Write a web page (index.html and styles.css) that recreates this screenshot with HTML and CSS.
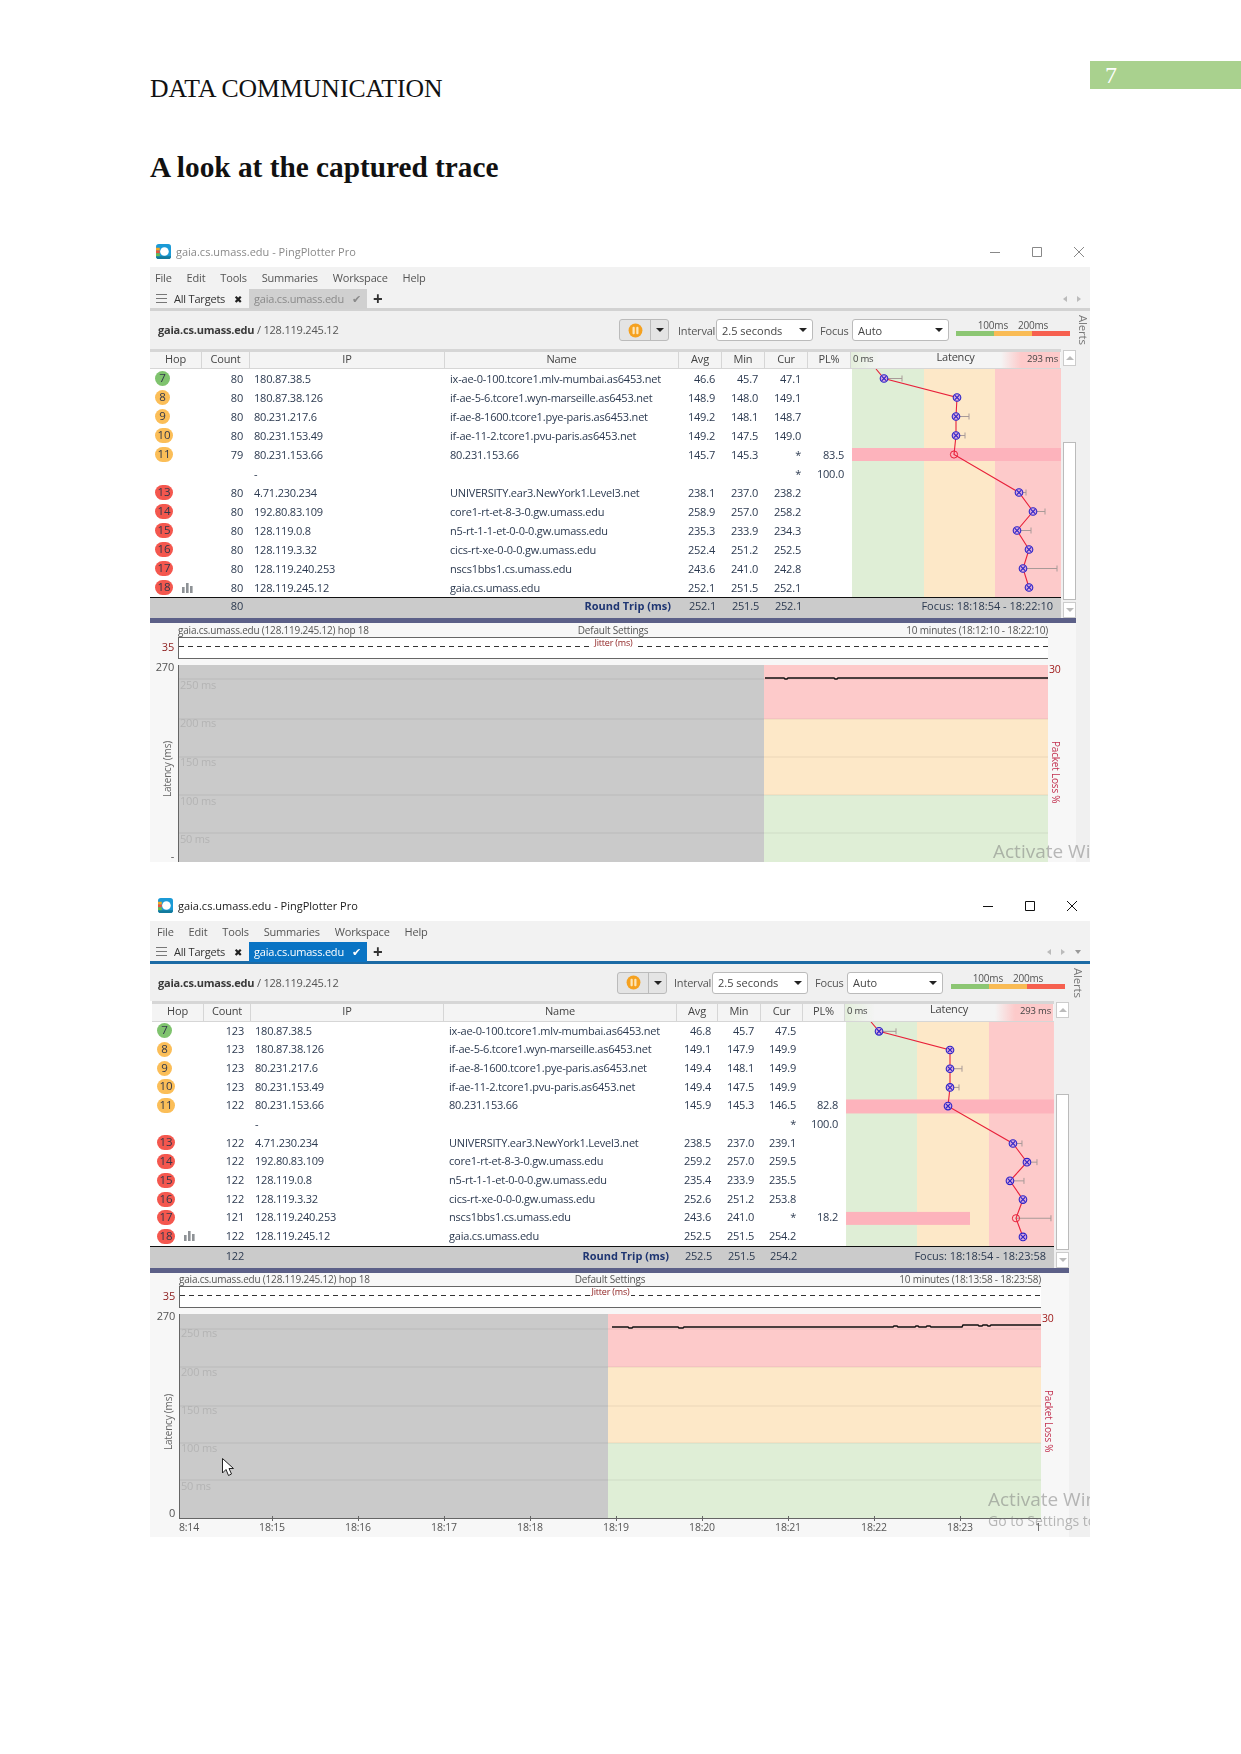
FILE: index.html

```html
<!DOCTYPE html>
<html lang="en">
<head>
  <meta charset="UTF-8" />
  <title>Data Communication</title>
  <link rel="stylesheet" href="styles.css">
</head>
<body>

  <svg class="defs" aria-hidden="true">
    <symbol id="mark" viewBox="0 0 10 10">
      <circle cx="5" cy="5" r="3.8" fill="#d9a6d9" stroke="#2a22c8" stroke-width="1.1"/>
      <path d="M2.6 2.6 7.4 7.4M7.4 2.6 2.6 7.4" stroke="#2a22c8" stroke-width="1.1"/>
    </symbol>
    <symbol id="logo" viewBox="0 0 16 16">
      <rect width="16" height="16" rx="3" fill="#1b9ad6"/>
      <path d="M0 13h16v0a3 3 0 0 1-3 3H3a3 3 0 0 1-3-3z" fill="#137a9c"/>
      <rect y="4" width="4" height="3" fill="#f5a623"/>
      <rect y="7" width="4" height="3" fill="#e8553a"/>
      <rect y="10" width="4" height="3" fill="#6dbb4b"/>
      <circle cx="9" cy="8" r="4.6" fill="#fff"/>
    </symbol>
    <symbol id="pause" viewBox="0 0 16 16">
      <circle cx="8" cy="8" r="7.4" fill="#f5a11f"/>
      <rect x="4.8" y="4" width="2.4" height="8" rx="1" fill="#fde6b8"/>
      <rect x="8.8" y="4" width="2.4" height="8" rx="1" fill="#fde6b8"/>
    </symbol>
    <symbol id="bars" viewBox="0 0 11 10">
      <rect y="4" width="2.6" height="6" fill="#8e9296"/>
      <rect x="4" width="2.6" height="10" fill="#8e9296"/>
      <rect x="8" y="3" width="2.6" height="7" fill="#8e9296"/>
    </symbol>
  </svg>

  <header class="doc-head">
    <div class="doc-title">DATA COMMUNICATION</div>
    <div class="page-no">7</div>
  </header>

  <h1 class="doc-heading">A look at the captured trace</h1>

  <!-- first capture -->
  <section class="window win-a">
    <div class="titlebar">
      <svg class="logo"><use href="#logo"/></svg>
      <span class="title">gaia.cs.umass.edu - PingPlotter Pro</span>
      <div class="win-btns">
        <svg viewBox="0 0 10 10"><path d="M0 5.5h10"/></svg>
        <svg viewBox="0 0 10 10"><path d="M.5.5h9v9h-9z"/></svg>
        <svg viewBox="0 0 10 10"><path d="M0 0 10 10M10 0 0 10"/></svg>
      </div>
    </div>
    <nav class="menubar"><span>File</span><span>Edit</span><span>Tools</span><span>Summaries</span><span>Workspace</span><span>Help</span></nav>
    <div class="tabbar">
      <span class="burger"></span>
      <span class="all-targets">All Targets</span>
      <span class="tab-x">&#10006;</span>
      <span class="tab">gaia.cs.umass.edu<i class="tab-check">&#10004;</i></span>
      <span class="tab-add">+</span>
      <span class="tab-nav"><i class="tri-l"></i><i class="tri-r"></i></span>
    </div>

    <div class="content">
      <div class="content-main">
        <div class="toolbar">
          <div class="crumb"><b>gaia.cs.umass.edu</b> / 128.119.245.12</div>
          <div class="pause-group">
            <span class="pause-btn"><svg><use href="#pause"/></svg></span>
            <span class="pause-drop"><i class="caret"></i></span>
          </div>
          <span class="tool-label">Interval</span>
          <span class="combo">2.5 seconds<i class="caret"></i></span>
          <span class="tool-label label-focus">Focus</span>
          <span class="combo">Auto<i class="caret"></i></span>
          <div class="legend">
            <div class="legend-text"><span>100ms</span><span>200ms</span></div>
            <div class="legend-bar"><i class="lg-green"></i><i class="lg-orange"></i><i class="lg-red"></i></div>
          </div>
        </div>

        <div class="results">
          <div class="results-main">
            <div class="thead">
              <span>Hop</span><span>Count</span><span>IP</span><span>Name</span><span>Avg</span><span>Min</span><span>Cur</span><span>PL%</span>
              <div class="lat-head"><em>0 ms</em><strong>Latency</strong><em class="lat-max">293 ms</em></div>
            </div>
            <div class="tbody">
              <div class="rows">
                <div class="row"><span class="hop"><b class="badge green">7</b></span><span class="n">80</span><span>180.87.38.5</span><span>ix-ae-0-100.tcore1.mlv-mumbai.as6453.net</span><span class="n">46.6</span><span class="n">45.7</span><span class="n">47.1</span><span class="n"></span></div>
                <div class="row"><span class="hop"><b class="badge orange">8</b></span><span class="n">80</span><span>180.87.38.126</span><span>if-ae-5-6.tcore1.wyn-marseille.as6453.net</span><span class="n">148.9</span><span class="n">148.0</span><span class="n">149.1</span><span class="n"></span></div>
                <div class="row"><span class="hop"><b class="badge orange">9</b></span><span class="n">80</span><span>80.231.217.6</span><span>if-ae-8-1600.tcore1.pye-paris.as6453.net</span><span class="n">149.2</span><span class="n">148.1</span><span class="n">148.7</span><span class="n"></span></div>
                <div class="row"><span class="hop"><b class="badge orange wide">10</b></span><span class="n">80</span><span>80.231.153.49</span><span>if-ae-11-2.tcore1.pvu-paris.as6453.net</span><span class="n">149.2</span><span class="n">147.5</span><span class="n">149.0</span><span class="n"></span></div>
                <div class="row"><span class="hop"><b class="badge orange wide">11</b></span><span class="n">79</span><span>80.231.153.66</span><span>80.231.153.66</span><span class="n">145.7</span><span class="n">145.3</span><span class="n">*</span><span class="n">83.5</span></div>
                <div class="row"><span class="hop"></span><span class="n"></span><span>-</span><span></span><span class="n"></span><span class="n"></span><span class="n">*</span><span class="n">100.0</span></div>
                <div class="row"><span class="hop"><b class="badge red wide">13</b></span><span class="n">80</span><span>4.71.230.234</span><span>UNIVERSITY.ear3.NewYork1.Level3.net</span><span class="n">238.1</span><span class="n">237.0</span><span class="n">238.2</span><span class="n"></span></div>
                <div class="row"><span class="hop"><b class="badge red wide">14</b></span><span class="n">80</span><span>192.80.83.109</span><span>core1-rt-et-8-3-0.gw.umass.edu</span><span class="n">258.9</span><span class="n">257.0</span><span class="n">258.2</span><span class="n"></span></div>
                <div class="row"><span class="hop"><b class="badge red wide">15</b></span><span class="n">80</span><span>128.119.0.8</span><span>n5-rt-1-1-et-0-0-0.gw.umass.edu</span><span class="n">235.3</span><span class="n">233.9</span><span class="n">234.3</span><span class="n"></span></div>
                <div class="row"><span class="hop"><b class="badge red wide">16</b></span><span class="n">80</span><span>128.119.3.32</span><span>cics-rt-xe-0-0-0.gw.umass.edu</span><span class="n">252.4</span><span class="n">251.2</span><span class="n">252.5</span><span class="n"></span></div>
                <div class="row"><span class="hop"><b class="badge red wide">17</b></span><span class="n">80</span><span>128.119.240.253</span><span>nscs1bbs1.cs.umass.edu</span><span class="n">243.6</span><span class="n">241.0</span><span class="n">242.8</span><span class="n"></span></div>
                <div class="row"><span class="hop"><b class="badge red wide">18</b><svg class="bars"><use href="#bars"/></svg></span><span class="n">80</span><span>128.119.245.12</span><span>gaia.cs.umass.edu</span><span class="n">252.1</span><span class="n">251.5</span><span class="n">252.1</span><span class="n"></span></div>
              </div>
              <svg class="latency" viewBox="0 0 209 228">
                <rect width="72" height="228" fill="#dfeed6"/>
                <rect x="72" width="71" height="228" fill="#fde8c8"/>
                <rect x="143" width="66" height="228" fill="#fdcaca"/>
                <rect y="79" width="209" height="13" fill="#fdb3bc"/>
                <g class="tails">
                  <path d="M32 9.5H50M50 6.5v6M104 47.5H117M117 44.5v6M104 66.5H113M113 63.5v6M167 123.5H174M174 120.5v6M181 142.5H193M193 139.5v6M165 161.5H179M179 158.5v6M171 199.5H205M205 196.5v6"/>
                </g>
                <polyline class="trace" points="24,0 32,9.5 105,28.5 104,47.5 104,66.5 102,85.5 167,123.5 181,142.5 165,161.5 177,180.5 171,199.5 177,218.5"/>
                <use href="#mark" x="27" y="4.5" width="10" height="10"/>
                <use href="#mark" x="100" y="23.5" width="10" height="10"/>
                <use href="#mark" x="99" y="42.5" width="10" height="10"/>
                <use href="#mark" x="99" y="61.5" width="10" height="10"/>
                <circle class="lost" cx="102" cy="85.5" r="3.6"/>
                <use href="#mark" x="162" y="118.5" width="10" height="10"/>
                <use href="#mark" x="176" y="137.5" width="10" height="10"/>
                <use href="#mark" x="160" y="156.5" width="10" height="10"/>
                <use href="#mark" x="172" y="175.5" width="10" height="10"/>
                <use href="#mark" x="166" y="194.5" width="10" height="10"/>
                <use href="#mark" x="172" y="213.5" width="10" height="10"/>
              </svg>
            </div>
            <div class="summary">
              <span></span><span class="n">80</span><span class="round-trip">Round Trip (ms)</span><span class="n">252.1</span><span class="n">251.5</span><span class="n">252.1</span><span class="focus-range">Focus: 18:18:54 - 18:22:10</span>
            </div>
          </div>
          <div class="scrollbar">
            <span class="scroll-btn"><i class="up"></i></span>
            <span class="scroll-track"><i class="scroll-thumb"></i></span>
            <span class="scroll-btn"><i class="down"></i></span>
          </div>
        </div>

        <div class="divider"></div>

        <div class="graph">
          <div class="graph-head">
            <span>gaia.cs.umass.edu (128.119.245.12) hop 18</span>
            <span>Default Settings</span>
            <span class="graph-range">10 minutes (18:12:10 - 18:22:10)</span>
          </div>
          <div class="jitter-row">
            <span class="jitter-val">35</span>
            <div class="jitter"><span>Jitter (ms)</span></div>
          </div>
          <div class="plot-row">
            <div class="gutter">
              <span>270</span>
              <span class="vlabel">Latency (ms)</span>
              <span>-</span>
            </div>
            <svg class="plot" viewBox="0 0 870 197">
              <rect width="586" height="197" fill="#cacaca"/>
              <rect x="586" width="284" height="54" fill="#fdcaca"/>
              <rect x="586" y="54" width="284" height="76" fill="#fde8c8"/>
              <rect x="586" y="130" width="284" height="67" fill="#dfeed6"/>
              <path class="grid" d="M0 14H870M0 54H870M0 92H870M0 130H870M0 168H870"/>
              <path class="axis-y" d="M.5 0V197"/>
              <text x="2" y="24">250 ms</text>
              <text x="2" y="62">200 ms</text>
              <text x="2" y="101">150 ms</text>
              <text x="2" y="140">100 ms</text>
              <text x="2" y="178">50 ms</text>
              <path class="rtt" d="M587 13H606L607 14H609L610 13H656L657 14H659L660 13H870"/>
            </svg>
            <div class="gutter-right">
              <span class="loss-max">30</span>
              <span class="vlabel-right">Packet Loss %</span>
            </div>
          </div>
        </div>
      </div>
      <aside class="strip"><span>Alerts</span></aside>
    </div>
    <div class="activate">
      <div>Activate Windows</div>
      <small>Go to Settings to activate Windows.</small>
    </div>
  </section>

  <!-- second capture -->
  <section class="window win-b">
    <div class="titlebar">
      <svg class="logo"><use href="#logo"/></svg>
      <span class="title">gaia.cs.umass.edu - PingPlotter Pro</span>
      <div class="win-btns">
        <svg viewBox="0 0 10 10"><path d="M0 5.5h10"/></svg>
        <svg viewBox="0 0 10 10"><path d="M.5.5h9v9h-9z"/></svg>
        <svg viewBox="0 0 10 10"><path d="M0 0 10 10M10 0 0 10"/></svg>
      </div>
    </div>
    <nav class="menubar"><span>File</span><span>Edit</span><span>Tools</span><span>Summaries</span><span>Workspace</span><span>Help</span></nav>
    <div class="tabbar">
      <span class="burger"></span>
      <span class="all-targets">All Targets</span>
      <span class="tab-x">&#10006;</span>
      <span class="tab">gaia.cs.umass.edu<i class="tab-check">&#10004;</i></span>
      <span class="tab-add">+</span>
      <span class="tab-nav"><i class="tri-l"></i><i class="tri-r"></i><i class="tri-d"></i></span>
    </div>

    <div class="content">
      <div class="content-main">
        <div class="toolbar">
          <div class="crumb"><b>gaia.cs.umass.edu</b> / 128.119.245.12</div>
          <div class="pause-group">
            <span class="pause-btn"><svg><use href="#pause"/></svg></span>
            <span class="pause-drop"><i class="caret"></i></span>
          </div>
          <span class="tool-label">Interval</span>
          <span class="combo">2.5 seconds<i class="caret"></i></span>
          <span class="tool-label label-focus">Focus</span>
          <span class="combo">Auto<i class="caret"></i></span>
          <div class="legend">
            <div class="legend-text"><span>100ms</span><span>200ms</span></div>
            <div class="legend-bar"><i class="lg-green"></i><i class="lg-orange"></i><i class="lg-red"></i></div>
          </div>
        </div>

        <div class="results">
          <div class="results-main">
            <div class="thead">
              <span>Hop</span><span>Count</span><span>IP</span><span>Name</span><span>Avg</span><span>Min</span><span>Cur</span><span>PL%</span>
              <div class="lat-head"><em>0 ms</em><strong>Latency</strong><em class="lat-max">293 ms</em></div>
            </div>
            <div class="tbody">
              <div class="rows">
                <div class="row"><span class="hop"><b class="badge green">7</b></span><span class="n">123</span><span>180.87.38.5</span><span>ix-ae-0-100.tcore1.mlv-mumbai.as6453.net</span><span class="n">46.8</span><span class="n">45.7</span><span class="n">47.5</span><span class="n"></span></div>
                <div class="row"><span class="hop"><b class="badge orange">8</b></span><span class="n">123</span><span>180.87.38.126</span><span>if-ae-5-6.tcore1.wyn-marseille.as6453.net</span><span class="n">149.1</span><span class="n">147.9</span><span class="n">149.9</span><span class="n"></span></div>
                <div class="row"><span class="hop"><b class="badge orange">9</b></span><span class="n">123</span><span>80.231.217.6</span><span>if-ae-8-1600.tcore1.pye-paris.as6453.net</span><span class="n">149.4</span><span class="n">148.1</span><span class="n">149.9</span><span class="n"></span></div>
                <div class="row"><span class="hop"><b class="badge orange wide">10</b></span><span class="n">123</span><span>80.231.153.49</span><span>if-ae-11-2.tcore1.pvu-paris.as6453.net</span><span class="n">149.4</span><span class="n">147.5</span><span class="n">149.9</span><span class="n"></span></div>
                <div class="row"><span class="hop"><b class="badge orange wide">11</b></span><span class="n">122</span><span>80.231.153.66</span><span>80.231.153.66</span><span class="n">145.9</span><span class="n">145.3</span><span class="n">146.5</span><span class="n">82.8</span></div>
                <div class="row"><span class="hop"></span><span class="n"></span><span>-</span><span></span><span class="n"></span><span class="n"></span><span class="n">*</span><span class="n">100.0</span></div>
                <div class="row"><span class="hop"><b class="badge red wide">13</b></span><span class="n">122</span><span>4.71.230.234</span><span>UNIVERSITY.ear3.NewYork1.Level3.net</span><span class="n">238.5</span><span class="n">237.0</span><span class="n">239.1</span><span class="n"></span></div>
                <div class="row"><span class="hop"><b class="badge red wide">14</b></span><span class="n">122</span><span>192.80.83.109</span><span>core1-rt-et-8-3-0.gw.umass.edu</span><span class="n">259.2</span><span class="n">257.0</span><span class="n">259.5</span><span class="n"></span></div>
                <div class="row"><span class="hop"><b class="badge red wide">15</b></span><span class="n">122</span><span>128.119.0.8</span><span>n5-rt-1-1-et-0-0-0.gw.umass.edu</span><span class="n">235.4</span><span class="n">233.9</span><span class="n">235.5</span><span class="n"></span></div>
                <div class="row"><span class="hop"><b class="badge red wide">16</b></span><span class="n">122</span><span>128.119.3.32</span><span>cics-rt-xe-0-0-0.gw.umass.edu</span><span class="n">252.6</span><span class="n">251.2</span><span class="n">253.8</span><span class="n"></span></div>
                <div class="row"><span class="hop"><b class="badge red wide">17</b></span><span class="n">121</span><span>128.119.240.253</span><span>nscs1bbs1.cs.umass.edu</span><span class="n">243.6</span><span class="n">241.0</span><span class="n">*</span><span class="n">18.2</span></div>
                <div class="row"><span class="hop"><b class="badge red wide">18</b><svg class="bars"><use href="#bars"/></svg></span><span class="n">122</span><span>128.119.245.12</span><span>gaia.cs.umass.edu</span><span class="n">252.5</span><span class="n">251.5</span><span class="n">254.2</span><span class="n"></span></div>
              </div>
              <svg class="latency" viewBox="0 0 208 224.5">
                <rect width="71" height="224.5" fill="#dfeed6"/>
                <rect x="71" width="72" height="224.5" fill="#fde8c8"/>
                <rect x="143" width="65" height="224.5" fill="#fdcaca"/>
                <rect y="77.5" width="208" height="14" fill="#fdb3bc"/>
                <rect y="190" width="124" height="13" fill="#fdb3bc"/>
                <g class="tails">
                  <path d="M33 9.35H50M50 6.35v6M104 46.75H116M116 43.75v6M104 65.45H113M113 62.45v6M167 121.55H176M176 118.55v6M181 140.25H191M191 137.25v6M164 158.95H178M178 155.95v6M170 196.35H205M205 193.35v6"/>
                </g>
                <polyline class="trace" points="25,0 33,9.35 104,28 104,46.75 104,65.45 102,84.15 167,121.55 181,140.25 164,158.95 177,177.65 170,196.35 177,215.05"/>
                <use href="#mark" x="28" y="4.35" width="10" height="10"/>
                <use href="#mark" x="99" y="23" width="10" height="10"/>
                <use href="#mark" x="99" y="41.75" width="10" height="10"/>
                <use href="#mark" x="99" y="60.45" width="10" height="10"/>
                <use href="#mark" x="97" y="79.15" width="10" height="10"/>
                <use href="#mark" x="162" y="116.55" width="10" height="10"/>
                <use href="#mark" x="176" y="135.25" width="10" height="10"/>
                <use href="#mark" x="159" y="153.95" width="10" height="10"/>
                <use href="#mark" x="172" y="172.65" width="10" height="10"/>
                <circle class="lost" cx="170" cy="196.35" r="3.6"/>
                <use href="#mark" x="172" y="210.05" width="10" height="10"/>
              </svg>
            </div>
            <div class="summary">
              <span></span><span class="n">122</span><span class="round-trip">Round Trip (ms)</span><span class="n">252.5</span><span class="n">251.5</span><span class="n">254.2</span><span class="focus-range">Focus: 18:18:54 - 18:23:58</span>
            </div>
          </div>
          <div class="scrollbar">
            <span class="scroll-btn"><i class="up"></i></span>
            <span class="scroll-track"><i class="scroll-thumb"></i></span>
            <span class="scroll-btn"><i class="down"></i></span>
          </div>
        </div>

        <div class="divider"></div>

        <div class="graph">
          <div class="graph-head">
            <span>gaia.cs.umass.edu (128.119.245.12) hop 18</span>
            <span>Default Settings</span>
            <span class="graph-range">10 minutes (18:13:58 - 18:23:58)</span>
          </div>
          <div class="jitter-row">
            <span class="jitter-val">35</span>
            <div class="jitter"><span>Jitter (ms)</span></div>
          </div>
          <div class="plot-row">
            <div class="gutter">
              <span>270</span>
              <span class="vlabel">Latency (ms)</span>
              <span>0</span>
            </div>
            <svg class="plot" viewBox="0 0 862 205">
              <rect width="429" height="205" fill="#cacaca"/>
              <rect x="429" width="433" height="53" fill="#fdcaca"/>
              <rect x="429" y="53" width="433" height="76" fill="#fde8c8"/>
              <rect x="429" y="129" width="433" height="76" fill="#dfeed6"/>
              <path class="grid" d="M0 15H862M0 53H862M0 92H862M0 129H862M0 166H862"/>
              <path class="axis-y" d="M.5 0V205M0 204.5H862"/>
              <text x="2" y="23">250 ms</text>
              <text x="2" y="62">200 ms</text>
              <text x="2" y="100">150 ms</text>
              <text x="2" y="138">100 ms</text>
              <text x="2" y="176">50 ms</text>
              <path class="rtt" d="M433 13H449L450 14H453L454 13H499L500 14H504L505 13H714L715 12H718L719 13H736L737 12H739L740 13H747L748 12H751L752 13H783L784 11H799L800 12H803L804 11H808L809 12H811L812 11H862"/>
              <path class="cursor" d="M43.5 144.5V159L47 155.5 49.5 161.5 52.5 160 50 154.5H54.5Z"/>
            </svg>
            <div class="gutter-right">
              <span class="loss-max">30</span>
              <span class="vlabel-right">Packet Loss %</span>
            </div>
          </div>
          <div class="axis">
            <span class="first">8:14</span><span>18:15</span><span>18:16</span><span>18:17</span><span>18:18</span><span>18:19</span><span>18:20</span><span>18:21</span><span>18:22</span><span>18:23</span><span class="last">1</span>
          </div>
        </div>
      </div>
      <aside class="strip"><span>Alerts</span></aside>
    </div>
    <div class="activate">
      <div>Activate Windows</div>
      <small>Go to Settings to activate Windows.</small>
    </div>
  </section>

</body>
</html>
```

FILE: styles.css

```css
body {
  margin: 0;
  background-color: white;
  font-family: 'Liberation Serif', serif;
  color: #111;
}

.defs {
  width: 0;
  height: 0;
  display: block;
}

.doc-head {
  display: flex;
  justify-content: space-between;
  align-items: flex-start;
  padding: 61px 0 0 150px;
  height: 42px;
}

.doc-title {
  font-size: 25.7px;
  line-height: 28px;
  padding-top: 14px;
}

.page-no {
  width: 151px;
  height: 28px;
  box-sizing: border-box;
  padding-left: 15px;
  background-color: #a9d18e;
  color: white;
  font-size: 24px;
  line-height: 28px;
}

.doc-heading {
  margin: 46px 0 0 150px;
  height: 53px;
  font-size: 29.3px;
  line-height: 36px;
  font-weight: bold;
}

/* application window */
.window {
  position: relative;
  width: 940px;
  margin-left: 150px;
  overflow: hidden;
  background-color: white;
  font-family: 'Open Sans', sans-serif;
  font-size: 11px;
  letter-spacing: -0.2px;
  color: #2c3a50;
  filter: blur(0.35px);
}

.win-a {
  margin-top: 34px;
  height: 626px;
  --title-h: 31px;
  --title-top: 0px;
  --title-color: #8a8a8a;
  --logo-x: 6px;
  --ctl-pad: 6px;
  --ctl-stroke: #888;
  --menu-h: 22px;
  --menu-pad: 5px;
  --tab-bg: #d0d0d0;
  --tab-fg: #8a8a8a;
  --tab-line: #d2d2d2;
  --tool-h: 38px;
  --head-h: 20px;
  --row-h: 19px;
  --sum-h: 21px;
  --sum-line: 15px;
  --cols: 52px 48px 195px 234px 43px 43px 43px 43px;
  --sum-cols: 52px 48px 1fr 43px 43px 43px 252px;
  --lat-w: 209px;
  --table-pad: 0px;
  --main-w: 926px;
  --plot-w: 870px;
  --plot-h: 197px;
  --gutter: 28px;
  --pause-x: 466px;
  --label-gap: 9px;
  --combo-w: 97px;
  --legend-gap: 7px;
  --alerts-pad: 1px;
  --activate-x: 843px;
  --activate-y: 602px;
}

.win-b {
  margin-top: 23px;
  height: 652px;
  --title-h: 36px;
  --title-top: 5px;
  --title-color: #1a1a1a;
  --logo-x: 8px;
  --ctl-pad: 13px;
  --ctl-stroke: #111;
  --menu-h: 21px;
  --menu-pad: 7px;
  --tab-bg: #0a74c4;
  --tab-fg: white;
  --tab-line: #1b6aa5;
  --tool-h: 37px;
  --head-h: 20.5px;
  --row-h: 18.7px;
  --sum-h: 22px;
  --sum-line: 17px;
  --cols: 52px 47px 193px 233px 41px 43px 42px 42px;
  --sum-cols: 52px 47px 1fr 41px 43px 42px 250px;
  --lat-w: 208px;
  --table-pad: 2px;
  --main-w: 919px;
  --plot-w: 862px;
  --plot-h: 205px;
  --gutter: 29px;
  --pause-x: 464px;
  --label-gap: 7px;
  --combo-w: 96px;
  --legend-gap: 8px;
  --alerts-pad: 6px;
  --activate-x: 838px;
  --activate-y: 601px;
}

.titlebar {
  display: flex;
  align-items: center;
  height: var(--title-h);
  box-sizing: border-box;
  padding: var(--title-top) 0 0 var(--logo-x);
  color: var(--title-color);
  letter-spacing: 0;
}

.logo {
  width: 15px;
  height: 15px;
  margin-right: 5px;
}

.win-btns {
  margin-left: auto;
  display: flex;
  gap: 32px;
  padding-right: var(--ctl-pad);
}

.win-btns svg {
  width: 10px;
  height: 10px;
  fill: none;
  stroke: var(--ctl-stroke);
}

.menubar {
  display: flex;
  gap: 15px;
  align-items: center;
  height: var(--menu-h);
  padding-left: var(--menu-pad);
  background-color: #f2f2f2;
  line-height: 14px;
  color: #555;
}

.tabbar {
  display: flex;
  align-items: center;
  height: 19px;
  padding-left: 6px;
  background-color: #f2f2f2;
  border-bottom: 3px solid var(--tab-line);
  color: #333;
}

.burger {
  position: relative;
  width: 11px;
  height: 7px;
  border-top: 1px solid #777;
  border-bottom: 1px solid #777;
}

.burger::after {
  content: "";
  position: absolute;
  left: 0;
  right: 0;
  top: 3px;
  height: 1px;
  background-color: #777;
}

.all-targets {
  margin-left: 7px;
  width: 51px;
  white-space: nowrap;
}

.tab-x {
  margin-left: 9px;
  width: 9px;
  font-size: 10px;
  color: #222;
}

.tab {
  display: flex;
  align-items: center;
  justify-content: space-between;
  height: 20px;
  width: 118px;
  box-sizing: border-box;
  margin-left: 6px;
  padding: 0 6px 0 5px;
  background-color: var(--tab-bg);
  color: var(--tab-fg);
  white-space: nowrap;
}

.tab-check {
  font-style: normal;
  font-size: 11px;
}

.tab-add {
  margin-left: 6px;
  font-size: 17px;
  font-weight: bold;
  line-height: 17px;
  color: #333;
}

.tab-nav {
  margin-left: auto;
  display: flex;
  align-items: center;
  gap: 10px;
  padding-right: 9px;
}

.tri-l, .tri-r {
  width: 0;
  height: 0;
  border-top: 3px solid transparent;
  border-bottom: 3px solid transparent;
}

.tri-l {
  border-right: 4px solid #bbb;
}

.tri-r {
  border-left: 4px solid #bbb;
}

.tri-d {
  width: 0;
  height: 0;
  border-left: 3px solid transparent;
  border-right: 3px solid transparent;
  border-top: 4px solid #999;
}

.content {
  display: flex;
}

.content-main {
  width: var(--main-w);
  flex-shrink: 0;
}

.strip {
  flex: 1;
  display: flex;
  justify-content: flex-end;
  align-items: flex-start;
  padding: 4px var(--alerts-pad) 0 0;
  background-color: #f0f0f0;
}

.strip span {
  writing-mode: vertical-rl;
  line-height: 12px;
  font-size: 11.5px;
  color: #777;
}

.toolbar {
  display: flex;
  align-items: center;
  height: var(--tool-h);
  box-sizing: border-box;
  padding-left: 3px;
  background-color: #f0f0f0;
}

.crumb {
  width: var(--pause-x);
  flex-shrink: 0;
  box-sizing: border-box;
  padding: 0 0 1px 5px;
  color: #555;
}

.crumb b {
  color: #3a3a3a;
}

.pause-group {
  display: flex;
  height: 22px;
  width: 50px;
  box-sizing: border-box;
  border: 1px solid #bbb;
  border-radius: 3px;
  background-color: #e4e4e4;
}

.pause-btn {
  width: 30px;
  border-right: 1px solid #bbb;
  display: flex;
  align-items: center;
  justify-content: center;
}

.pause-btn svg {
  width: 15px;
  height: 15px;
}

.pause-drop {
  flex: 1;
  display: flex;
  align-items: center;
  justify-content: center;
}

.caret {
  width: 0;
  height: 0;
  border-left: 4px solid transparent;
  border-right: 4px solid transparent;
  border-top: 4px solid #222;
}

.tool-label {
  width: 36px;
  margin-left: var(--label-gap);
  margin-right: 2px;
  white-space: nowrap;
  color: #555;
}

.label-focus {
  width: 30px;
  margin-left: 7px;
}

.combo {
  display: flex;
  align-items: center;
  justify-content: space-between;
  width: var(--combo-w);
  height: 22px;
  box-sizing: border-box;
  padding: 0 5px;
  background-color: white;
  border: 1px solid #bbb;
  border-radius: 3px;
  letter-spacing: 0;
  color: #444;
}

.legend {
  width: 114px;
  margin: 0 0 5px var(--legend-gap);
}

.legend-text {
  display: flex;
  justify-content: center;
  gap: 10px;
  font-size: 10px;
  line-height: 12px;
  color: #555;
}

.legend-bar {
  display: flex;
  height: 5px;
}

.legend-bar i {
  flex: 1;
}

.lg-green {
  background-color: #8cc673;
}

.lg-orange {
  background-color: #f9bb55;
}

.lg-red {
  background-color: #f6604f;
}

.results {
  display: flex;
  background-color: #f0f0f0;
}

.results-main {
  flex: 1;
  padding-left: var(--table-pad);
  background-color: white;
}

.thead {
  display: grid;
  grid-template-columns: var(--cols) var(--lat-w);
  height: var(--head-h);
  box-sizing: border-box;
  border-top: 3px solid #d6d6d6;
  border-bottom: 1px solid #d6d6d6;
  background-color: #f4f4f4;
  color: #444;
}

.thead > span {
  text-align: center;
  line-height: 14px;
  border-right: 1px solid #d6d6d6;
}

.lat-head {
  display: grid;
  grid-template-columns: 1fr auto 1fr;
  padding: 0 2px;
  background: linear-gradient(90deg, #e4efdc 0, #f4f4f4 30px, #f4f4f4 150px, #fdcaca 170px);
  line-height: 10px;
}

.lat-head em {
  font-style: normal;
  font-size: 9.5px;
  line-height: 14px;
}

.lat-head .lat-max {
  text-align: right;
}

.lat-head strong {
  font-weight: normal;
  color: #444;
}

.tbody {
  display: flex;
}

.rows {
  flex: 1;
}

.row {
  display: grid;
  grid-template-columns: var(--cols);
  height: var(--row-h);
  line-height: var(--row-h);
  white-space: nowrap;
}

.row > span {
  padding-left: 4px;
  overflow: hidden;
}

.row > span:nth-child(4) {
  padding-left: 5px;
}

.row > .n, .summary > .n {
  padding: 0 7px 0 0;
  text-align: right;
}

.hop {
  display: flex;
  align-items: center;
  gap: 9px;
}

.row > .hop {
  padding-left: 5px;
}

.badge {
  width: 15px;
  height: 15px;
  border-radius: 8px;
  font-weight: normal;
  font-size: 11.5px;
  line-height: 13px;
  text-align: center;
  color: #33384a;
}

.badge.wide {
  width: 18px;
}

.green {
  background-color: #7fc36e;
}

.orange {
  background-color: #fbbe58;
}

.red {
  background-color: #f4574e;
}

.bars {
  width: 11px;
  height: 10px;
}

.latency {
  width: var(--lat-w);
  height: calc(var(--row-h) * 12);
  flex-shrink: 0;
}

.tails {
  fill: none;
  stroke: #a89a98;
  stroke-width: 1;
}

.trace {
  fill: none;
  stroke: #e8203a;
  stroke-width: 1.1;
}

.lost {
  fill: none;
  stroke: #e8203a;
}

.summary {
  display: grid;
  grid-template-columns: var(--sum-cols);
  height: var(--sum-h);
  box-sizing: border-box;
  margin-left: calc(var(--table-pad) * -1);
  padding-left: var(--table-pad);
  border-top: 1px solid #111;
  background-color: #cbcbcb;
  line-height: var(--sum-line);
}

.round-trip {
  text-align: right;
  padding-right: 9px;
  font-weight: bold;
  letter-spacing: 0;
  color: #1e3572;
}

.focus-range {
  text-align: right;
  padding-right: 8px;
  letter-spacing: 0;
}

.scrollbar {
  width: 15px;
  flex-shrink: 0;
  display: flex;
  flex-direction: column;
  gap: 2px;
  box-sizing: border-box;
  padding: 1px 0 0 2px;
  background-color: #f0f0f0;
}

.scroll-btn {
  height: 16px;
  display: flex;
  align-items: center;
  justify-content: center;
  box-sizing: border-box;
  border: 1px solid #ccc;
  background-color: white;
}

.scroll-btn .up, .scroll-btn .down {
  width: 0;
  height: 0;
  border-left: 4px solid transparent;
  border-right: 4px solid transparent;
}

.up {
  border-bottom: 4px solid #bbb;
}

.down {
  border-top: 4px solid #bbb;
}

.scroll-track {
  flex: 1;
  display: flex;
  flex-direction: column;
  justify-content: flex-end;
}

.scroll-thumb {
  height: 68%;
  box-sizing: border-box;
  border: 1px solid #bbb;
  background-color: white;
}

.divider {
  height: 5px;
  background-color: #5c6088;
}

.graph {
  height: 239px;
  background-color: #f7f7f7;
}

.win-b .graph {
  height: 264px;
}

.graph-head {
  display: grid;
  grid-template-columns: 1fr auto 1fr;
  width: var(--plot-w);
  margin-left: var(--gutter);
  font-size: 10px;
  line-height: 14px;
  color: #555;
}

.win-b .graph-head {
  line-height: 13px;
}

.graph-range {
  text-align: right;
}

.jitter-row {
  display: flex;
  height: 22px;
  margin-bottom: 6px;
}

.jitter-val {
  width: var(--gutter);
  box-sizing: border-box;
  padding-right: 4px;
  text-align: right;
  line-height: 19px;
  color: #8c1c1c;
}

.jitter {
  position: relative;
  width: var(--plot-w);
  box-sizing: border-box;
  border: 1px solid #666;
  border-right: none;
  background-color: white;
  text-align: center;
}

.jitter::before {
  content: "";
  position: absolute;
  left: 0;
  right: 0;
  top: 8px;
  height: 1px;
  background: repeating-linear-gradient(90deg, #333 0 5px, transparent 5px 9px);
}

.jitter span {
  position: relative;
  display: inline-block;
  padding: 0 2px;
  background-color: white;
  font-size: 9px;
  line-height: 9px;
  color: #8c1c1c;
  vertical-align: top;
}

.plot-row {
  display: flex;
  height: var(--plot-h);
}

.gutter {
  width: var(--gutter);
  box-sizing: border-box;
  padding-right: 4px;
  display: flex;
  flex-direction: column;
  justify-content: space-between;
  align-items: flex-end;
  line-height: 13px;
  margin-top: -5px;
  color: #555;
}

.gutter .vlabel {
  writing-mode: vertical-rl;
  transform: rotate(180deg);
  margin-top: 16px;
  font-size: 10px;
  line-height: 13px;
  color: #666;
}

.plot {
  width: var(--plot-w);
  height: var(--plot-h);
  flex-shrink: 0;
}

.plot text {
  font-size: 11px;
  fill: #b4b4b4;
}

.grid {
  fill: none;
  stroke: rgba(0, 0, 0, 0.07);
}

.axis-y {
  fill: none;
  stroke: #666;
}

.rtt {
  fill: none;
  stroke: #111;
  stroke-width: 1.5;
}

.cursor {
  fill: white;
  stroke: #222;
  stroke-width: 1;
}

.gutter-right {
  flex: 1;
  display: flex;
  flex-direction: column;
  align-items: flex-start;
  padding-left: 1px;
  color: #c2304f;
}

.loss-max {
  margin-top: -3px;
  font-size: 10.5px;
  color: #a01c1c;
}

.vlabel-right {
  writing-mode: vertical-rl;
  margin-top: 65px;
  font-size: 10px;
  line-height: 13px;
}

.axis {
  display: flex;
  width: var(--plot-w);
  margin-left: var(--gutter);
  font-size: 10.5px;
  line-height: 17px;
  color: #555;
}

.axis span {
  position: relative;
  width: 86px;
  text-align: center;
}

.axis span::before {
  content: "";
  position: absolute;
  left: 50%;
  top: -3px;
  height: 5px;
  border-left: 1px solid #666;
}

.axis .first {
  width: 50px;
  text-align: left;
}

.axis .last {
  width: 38px;
  text-align: right;
}

.axis .first::before, .axis .last::before {
  display: none;
}

.activate {
  position: absolute;
  left: var(--activate-x);
  top: var(--activate-y);
  white-space: nowrap;
  font-size: 19px;
  line-height: 26px;
  letter-spacing: 0;
  color: rgba(120, 120, 120, 0.5);
}

.activate small {
  display: block;
  font-size: 14px;
  line-height: 18px;
}
```
